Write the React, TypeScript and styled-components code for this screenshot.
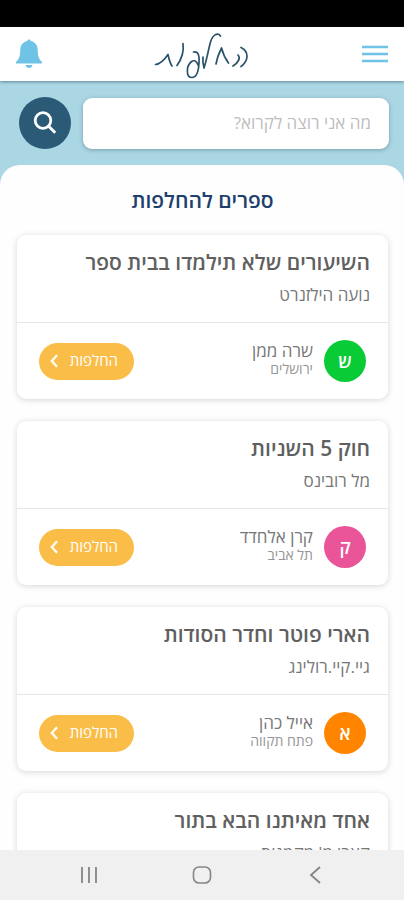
import React from "react";
import styled, { createGlobalStyle } from "styled-components";

const GlobalStyle = createGlobalStyle`
  *, *::before, *::after { box-sizing: border-box; }
  body { margin: 0; background: #fff; font-family: "Open Sans", "Liberation Sans", sans-serif; }
  button, input { font-family: inherit; }
  h1, h2, h3, p, ul { margin: 0; padding: 0; }
`;

const Shell = styled.div`
  display: flex;
  flex-direction: column;
  height: 100vh;
  overflow: hidden;
  background: #abd7e5;
`;

const StatusBar = styled.div`
  flex: none;
  height: 27px;
  background: #000;
`;

const Header = styled.header`
  flex: none;
  display: flex;
  align-items: center;
  justify-content: space-between;
  height: 54px;
  padding: 0 15px;
  background: #fff;
  box-shadow: 0 1px 3px rgba(40, 70, 85, 0.55);
`;

const IconButton = styled.button`
  display: flex;
  justify-content: center;
  min-width: 28px;
  padding: 0;
  border: 0;
  background: none;
  color: #6ec3e6;
  cursor: pointer;
`;

const SearchForm = styled.form`
  flex: none;
  display: flex;
  align-items: center;
  gap: 12px;
  padding: 16px 15px 16px 19px;
`;

const SearchInput = styled.input`
  flex: 1;
  min-width: 0;
  height: 51px;
  padding: 0 18px 2px;
  border: 0;
  border-radius: 9px;
  background: #fff;
  box-shadow: 0 1px 4px rgba(40, 70, 85, 0.4);
  color: #555;
  font-size: 17px;
  outline: none;
  &::placeholder { color: #bdbdbd; opacity: 1; }
`;

const SearchButton = styled.button`
  flex: none;
  display: flex;
  align-items: center;
  justify-content: center;
  width: 52px;
  height: 52px;
  padding: 0;
  border: 0;
  border-radius: 50%;
  background: #2b5a77;
  color: #fff;
  cursor: pointer;
`;

const Sheet = styled.main`
  flex: 1;
  min-height: 0;
  overflow-y: auto;
  scrollbar-width: none;
  padding: 20px 16px 0 17px;
  border-radius: 20px 20px 0 0;
  background: #fefefe;
`;

const SheetTitle = styled.h1`
  color: #1d416c;
  font-size: 21px;
  font-weight: 600;
  line-height: 30px;
  text-align: center;
`;

const BookList = styled.ul`
  display: flex;
  flex-direction: column;
  gap: 22px;
  margin-top: 20px;
  list-style: none;
`;

const Card = styled.li`
  border-radius: 9px;
  background: #fff;
  box-shadow: 0 1px 6px rgba(0, 0, 0, 0.16);
`;

const BookInfo = styled.div`
  height: 88px;
  padding: 12px 18px 0;
  border-bottom: 1px solid #e6e6e6;
`;

const BookTitle = styled.h2`
  color: #606060;
  font-size: 21px;
  font-weight: 600;
  line-height: 30px;
`;

const Author = styled.p`
  margin-top: 6px;
  color: #777;
  font-size: 17px;
  line-height: 24px;
`;

const OwnerRow = styled.div`
  display: flex;
  align-items: center;
  gap: 11px;
  height: 76px;
  padding: 0 22px;
`;

const Avatar = styled.span<{ $color: string }>`
  flex: none;
  display: flex;
  align-items: center;
  justify-content: center;
  width: 42px;
  height: 42px;
  border-radius: 50%;
  background: ${(p) => p.$color};
  color: #fff;
  font-size: 18px;
  font-weight: 600;
  line-height: 24px;
`;

const Owner = styled.div`
  flex: 1;
  padding-bottom: 5px;
`;

const OwnerName = styled.p`
  color: #777;
  font-size: 17px;
  line-height: 20px;
`;

const City = styled.p`
  color: #969696;
  font-size: 14px;
  line-height: 16px;
`;

const SwapButton = styled.button`
  display: flex;
  align-items: center;
  justify-content: space-between;
  width: 95px;
  height: 37px;
  padding: 0 16px 0 11px;
  border: 0;
  border-radius: 19px;
  background: #fabd48;
  color: #fff;
  font-size: 15px;
  cursor: pointer;
`;

const SwapLabel = styled.span`
  padding-bottom: 3px;
  line-height: 20px;
`;

const NavBar = styled.nav`
  flex: none;
  display: flex;
  align-items: center;
  justify-content: space-between;
  height: 50px;
  padding: 0 75px;
  background: #f0f0f0;
`;

const NavButton = styled(IconButton)`
  color: #858585;
`;

const BellIcon = () => (
  <svg width="28" height="30" viewBox="0 0 28 30" fill="currentColor" aria-hidden="true">
    <path d="M14 .5c1 0 1.600.6 1.700 1.600 4.300.9 6.800 4 7 8.400.2 6.500.8 9.300 4.300 12.500v1.500H1V23c3.500-3.200 4.100-6 4.300-12.500.2-4.400 2.700-7.500 7-8.400.1-1 .7-1.600 1.700-1.600Z" />
    <path d="M10.500 26h7c-.4 1.900-1.600 3-3.500 3s-3.100-1.100-3.500-3Z" />
  </svg>
);

const MenuIcon = () => (
  <svg width="26" height="18" viewBox="0 0 26 18" stroke="currentColor" strokeWidth="2.600" aria-hidden="true">
    <path d="M0 2h26M0 9h26M0 16h26" />
  </svg>
);

const SearchIcon = () => (
  <svg width="24" height="24" viewBox="0 0 24 24" fill="none" stroke="currentColor" strokeWidth="2.800" aria-hidden="true">
    <circle cx="10" cy="9.500" r="7.800" />
    <path d="M15.700 15.200l6.500 6.500" />
  </svg>
);

const LogoMark = () => (
  <svg
    width="100"
    height="50"
    viewBox="0 0 100 50"
    fill="none"
    stroke="#2a5269"
    strokeWidth="1.700"
    strokeLinecap="round"
    strokeLinejoin="round"
    role="img"
    aria-label="החלפות"
  >
    <path d="M89 18.500c8 4 8 13 0 19" />
    <path d="M86 26c3 3 0 8-5 11" />
    <path d="M64 35c1-6 3-11 5.500-16 1.500 6 4 11 7 15" />
    <path d="M68.500 7c-3-4-8-1-10 6-2.500 9-3.500 17-6.500 26-1-4-1.500-7-1-11" />
    <path d="M41.500 23c5-1 6 4 5.500 11-.5 9-3 14.500-7 14.500-6 0-6-11-1-15.500 3-2.500 6-1 7 3" />
    <path d="M31 14.500c1 7-1 15-6 22" />
    <path d="M3.500 35.500C9 35 13 30 16 25.500c1 4 1.500 8 4 11.500" />
  </svg>
);

const ChevronIcon = () => (
  <svg width="8" height="14" viewBox="0 0 8 14" fill="none" stroke="currentColor" strokeWidth="2.200" aria-hidden="true">
    <path d="M7 1.200L1.800 7 7 12.800" />
  </svg>
);

const books = [
  { title: "השיעורים שלא תילמדו בבית ספר", author: "נועה הילזנרט", owner: "שרה ממן", city: "ירושלים", initial: "ש", color: "#08cb35" },
  { title: "חוק 5 השניות", author: "מל רובינס", owner: "קרן אלחדד", city: "תל אביב", initial: "ק", color: "#ea5499" },
  { title: "הארי פוטר וחדר הסודות", author: "גיי.קיי.רולינג", owner: "אייל כהן", city: "פתח תקווה", initial: "א", color: "#ff8500" },
];

const nextBook = { title: "אחד מאיתנו הבא בתור", author: "קארן מ' מקמנוס" };

export default function App() {
  return (
    <Shell>
      <GlobalStyle />
      <StatusBar />
      <Header>
        <IconButton type="button" aria-label="התראות"><BellIcon /></IconButton>
        <LogoMark />
        <IconButton type="button" aria-label="תפריט"><MenuIcon /></IconButton>
      </Header>
      <SearchForm role="search" onSubmit={(e) => e.preventDefault()}>
        <SearchButton type="submit" aria-label="חיפוש"><SearchIcon /></SearchButton>
        <SearchInput dir="rtl" type="text" aria-label="חיפוש ספר" placeholder="מה אני רוצה לקרוא?" />
      </SearchForm>
      <Sheet dir="rtl">
        <SheetTitle>ספרים להחלפות</SheetTitle>
        <BookList>
          {books.map((b) => (
            <Card key={b.title}>
              <BookInfo>
                <BookTitle>{b.title}</BookTitle>
                <Author>{b.author}</Author>
              </BookInfo>
              <OwnerRow>
                <Avatar $color={b.color}>{b.initial}</Avatar>
                <Owner>
                  <OwnerName>{b.owner}</OwnerName>
                  <City>{b.city}</City>
                </Owner>
                <SwapButton type="button"><SwapLabel>החלפות</SwapLabel><ChevronIcon /></SwapButton>
              </OwnerRow>
            </Card>
          ))}
          <Card>
            <BookInfo>
              <BookTitle>{nextBook.title}</BookTitle>
              <Author>{nextBook.author}</Author>
            </BookInfo>
          </Card>
        </BookList>
      </Sheet>
      <NavBar>
        <NavButton type="button" aria-label="יישומים אחרונים">
          <svg width="26" height="18" viewBox="0 0 26 18" stroke="currentColor" strokeWidth="1.800" aria-hidden="true">
            <path d="M6 1v16M13 1v16M20 1v16" />
          </svg>
        </NavButton>
        <NavButton type="button" aria-label="בית">
          <svg width="20" height="20" viewBox="0 0 20 20" fill="none" stroke="currentColor" strokeWidth="1.600" aria-hidden="true">
            <rect x="1.500" y="2" width="17" height="16" rx="5.500" />
          </svg>
        </NavButton>
        <NavButton type="button" aria-label="חזרה">
          <svg width="26" height="18" viewBox="0 0 26 18" fill="none" stroke="currentColor" strokeWidth="1.800" aria-hidden="true">
            <path d="M18 1L9 9l9 8" />
          </svg>
        </NavButton>
      </NavBar>
    </Shell>
  );
}
